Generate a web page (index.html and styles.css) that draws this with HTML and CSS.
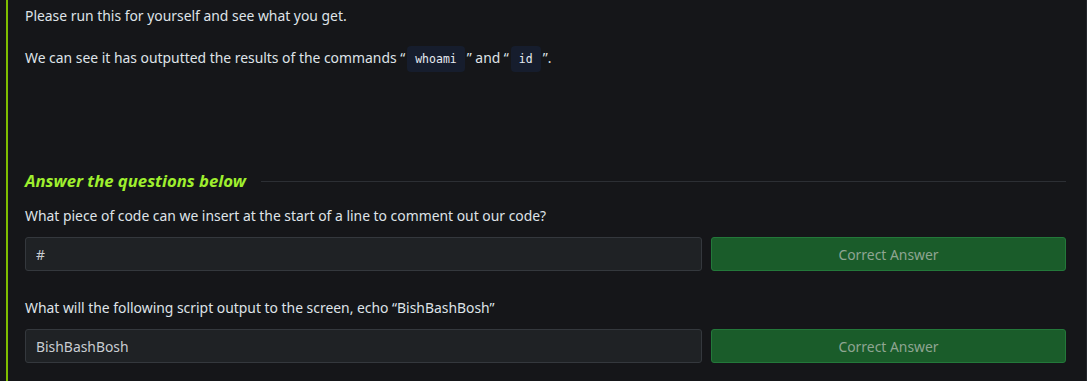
FILE: index.html
```html
<!DOCTYPE html>
<html lang="en">
<head>
	<meta charset="UTF-8">
	<title>Task</title>
	<link rel="stylesheet" href="styles.css">
</head>
<body>
	<div class="task-body">
		<p>Please run this for yourself and see what you get.</p>
		<p>We can see it has outputted the results of the commands &#8220;<code>whoami</code>&#8221; and &#8220;<code>id</code>&#8221;.</p>

		<div class="questions">
			<h4 class="questions-heading"><span>Answer the questions below</span></h4>

			<div class="question">
				<p>What piece of code can we insert at the start of a line to comment out our code?</p>
				<div class="answer-row">
					<input class="answer-input" type="text" value="#" readonly>
					<button class="answer-btn">Correct Answer</button>
				</div>
			</div>

			<div class="question">
				<p>What will the following script output to the screen, echo &#8220;BishBashBosh&#8221;</p>
				<div class="answer-row">
					<input class="answer-input" type="text" value="BishBashBosh" readonly>
					<button class="answer-btn">Correct Answer</button>
				</div>
			</div>
		</div>
	</div>
</body>
</html>
```

FILE: styles.css
```css
* {
	box-sizing: border-box;
}

body {
	margin: 0;
	background-color: #151619;
	font-family: 'Noto Sans', 'Open Sans', sans-serif;
	font-size: 13.9px;
	color: #dfe3e8;
	border-right: 1px solid #22252a;
	height: 381px;
	overflow: hidden;
}

.task-body {
	margin-left: 6px;
	border-left: 2px solid #7fbe00;
	padding: 5px 20px 0 17px;
	height: 381px;
}

.task-body p {
	margin: 0 0 19px;
	line-height: 22px;
}

code {
	display: inline-block;
	font-family: 'DejaVu Sans Mono', monospace;
	font-size: 11.5px;
	line-height: 26px;
	padding: 0 8px;
	margin: 0 2px;
	background-color: #161d2d;
	color: #e6ebf2;
	border-radius: 4px;
	vertical-align: middle;
}

.questions {
	margin-top: 98px;
}

.questions-heading {
	display: flex;
	align-items: center;
	gap: 15px;
	margin: 0 0 13px;
	font-size: 16.7px;
	font-style: italic;
	font-weight: 700;
	color: #9fef2e;
	line-height: 22px;
}

.questions-heading::after {
	content: '';
	flex: 1;
	height: 1px;
	background-color: #2c2f34;
}

.question p {
	margin: 0 0 10px;
}

.question {
	margin-bottom: 26px;
}

.question:last-child {
	margin-bottom: 0;
}

.answer-row {
	display: flex;
	gap: 9px;
}

.answer-input {
	flex: 0 0 677px;
	height: 34px;
	padding: 0 10px;
	font-family: inherit;
	font-size: 13.9px;
	color: #c9cdd2;
	background-color: #1f2225;
	border: 1px solid #34383d;
	border-radius: 3px;
	outline: none;
}

.answer-btn {
	flex: 1;
	height: 34px;
	font-family: inherit;
	font-size: 13.9px;
	color: #8fa592;
	background-color: #1a5c2a;
	border: 1px solid #23783a;
	border-radius: 3px;
}
```
